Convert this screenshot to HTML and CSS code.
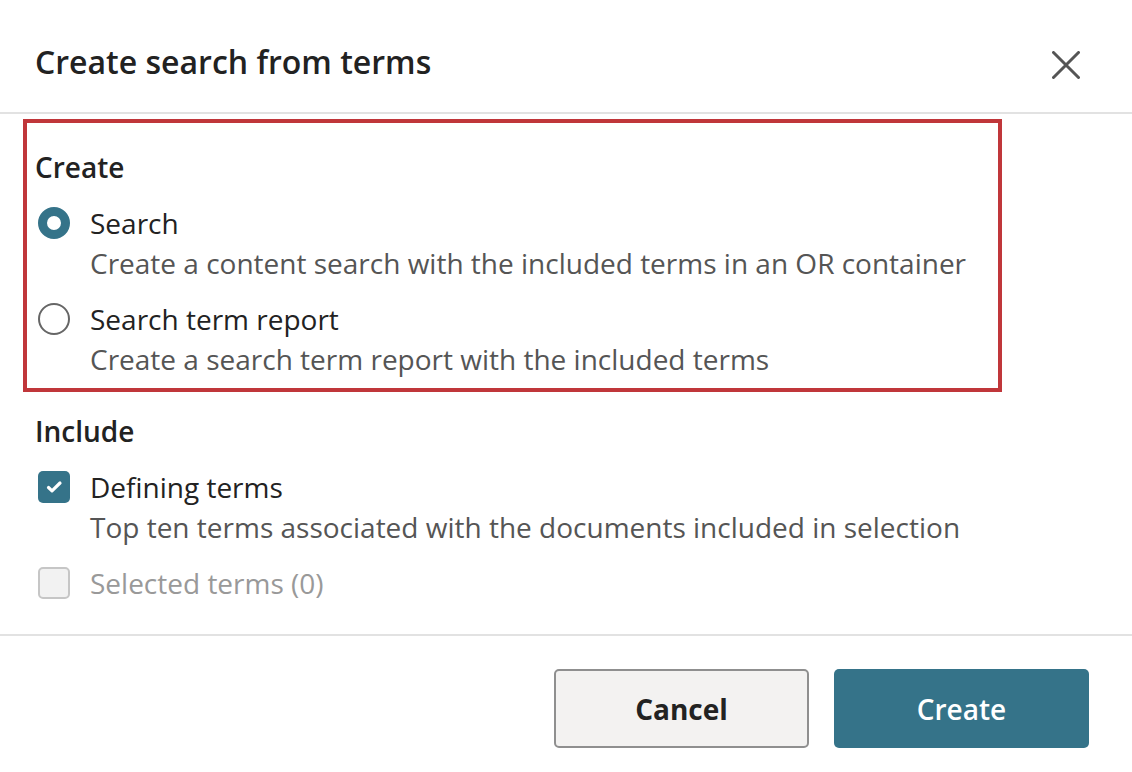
FILE: index.html
```html
<!DOCTYPE html>
<html lang="en">
<head>
<meta charset="utf-8">
<title>Create search from terms</title>
<link rel="stylesheet" href="styles.css">
</head>
<body>
<div class="dialog">
  <header class="dlg-header">
    <h1 class="dlg-title">Create search from terms</h1>
    <button class="close-btn" aria-label="Close">
      <svg width="28" height="28" viewBox="0 0 28 28"><path d="M1.5 1.5 L26.5 26.5 M26.5 1.5 L1.5 26.5" stroke="#555" stroke-width="3" stroke-linecap="round" fill="none"/></svg>
    </button>
  </header>
  <main class="dlg-body">
    <section class="highlight">
      <div class="group-label">Create</div>
      <div class="option">
        <span class="radio checked"></span>
        <div class="opt-text">
          <div class="opt-label">Search</div>
          <div class="opt-desc">Create a content search with the included terms in an OR container</div>
        </div>
      </div>
      <div class="option">
        <span class="radio"></span>
        <div class="opt-text">
          <div class="opt-label">Search term report</div>
          <div class="opt-desc">Create a search term report with the included terms</div>
        </div>
      </div>
    </section>
    <section class="plain">
      <div class="group-label">Include</div>
      <div class="option">
        <span class="check checked">
          <svg width="32" height="32" viewBox="0 0 32 32"><path d="M10.5 16.5 L14 19.8 L22 12" stroke="#fff" stroke-width="3.2" stroke-linecap="round" stroke-linejoin="round" fill="none"/></svg>
        </span>
        <div class="opt-text">
          <div class="opt-label">Defining terms</div>
          <div class="opt-desc">Top ten terms associated with the documents included in selection</div>
        </div>
      </div>
      <div class="option">
        <span class="check disabled"></span>
        <div class="opt-text">
          <div class="opt-label muted">Selected terms (0)</div>
        </div>
      </div>
    </section>
  </main>
  <footer class="dlg-footer">
    <button class="btn btn-secondary">Cancel</button>
    <button class="btn btn-primary">Create</button>
  </footer>
</div>
</body>
</html>
```
FILE: styles.css
```css
html, body {
  margin: 0;
  padding: 0;
  background: #fff;
}
body {
  font-family: "Open Sans", "Noto Sans", sans-serif;
  color: #222;
  width: 1132px;
  height: 772px;
  overflow: hidden;
}
.dialog {
  display: flex;
  flex-direction: column;
}
.dlg-header {
  box-sizing: border-box;
  border-bottom: 2px solid #e2e2e2;
  display: flex;
  align-items: flex-start;
  justify-content: space-between;
  padding: 40px 52px 0 35px;
  height: 114px;
}
.dlg-title {
  margin: 0;
  font-size: 32px;
  font-weight: 600;
  line-height: 44px;
  color: #222;
}
.close-btn {
  margin-top: 11px;
  border: 0;
  background: none;
  padding: 0;
  width: 28px;
  height: 28px;
  display: block;
}
.close-btn svg { display: block; }
.dlg-body {
  display: flex;
  flex-direction: column;
}
.highlight {
  margin: 5px 0 0 23px;
  width: 979px;
  box-sizing: border-box;
  border: 4px solid #c0363a;
  padding: 24px 0 9px 8px;
  display: flex;
  flex-direction: column;
  gap: 16px;
}
.plain {
  padding: 19px 0 0 35px;
  display: flex;
  flex-direction: column;
  gap: 16px;
}
.group-label {
  font-size: 28px;
  font-weight: 600;
  line-height: 40px;
  color: #222;
}
.option {
  display: flex;
  align-items: flex-start;
  gap: 20px;
}
.opt-text {
  font-size: 28px;
  line-height: 40px;
}
.opt-label { color: #222; }
.opt-label.muted { color: #999; }
.opt-desc { color: #555; }
.radio {
  flex: none;
  margin: 4px 0 0 3px;
  width: 32px;
  height: 32px;
  box-sizing: border-box;
  border-radius: 50%;
  border: 2px solid #666;
  background: #fff;
}
.radio.checked {
  border: 9.5px solid #357389;
}
.check {
  flex: none;
  margin: 4px 0 0 3px;
  width: 32px;
  height: 32px;
  box-sizing: border-box;
  border-radius: 5px;
  display: flex;
  align-items: center;
  justify-content: center;
}
.check.checked {
  background: #357389;
}
.check.disabled {
  background: #f2f2f2;
  border: 2px solid #c6c6c6;
}
.check svg { display: block; }
.dlg-footer {
  margin-top: 31px;
  border-top: 2px solid #e2e2e2;
  display: flex;
  justify-content: flex-end;
  gap: 25px;
  padding: 33px 43px 0 0;
}
.btn {
  width: 255px;
  height: 79px;
  box-sizing: border-box;
  border-radius: 5px;
  font-family: "Open Sans", "Noto Sans", sans-serif;
  font-size: 28px;
  font-weight: 700;
  cursor: pointer;
}
.btn-secondary {
  background: #f3f2f1;
  border: 2px solid #8f8f8f;
  color: #222;
}
.btn-primary {
  background: #357389;
  border: 0;
  color: #fff;
  font-weight: 600;
}
```
